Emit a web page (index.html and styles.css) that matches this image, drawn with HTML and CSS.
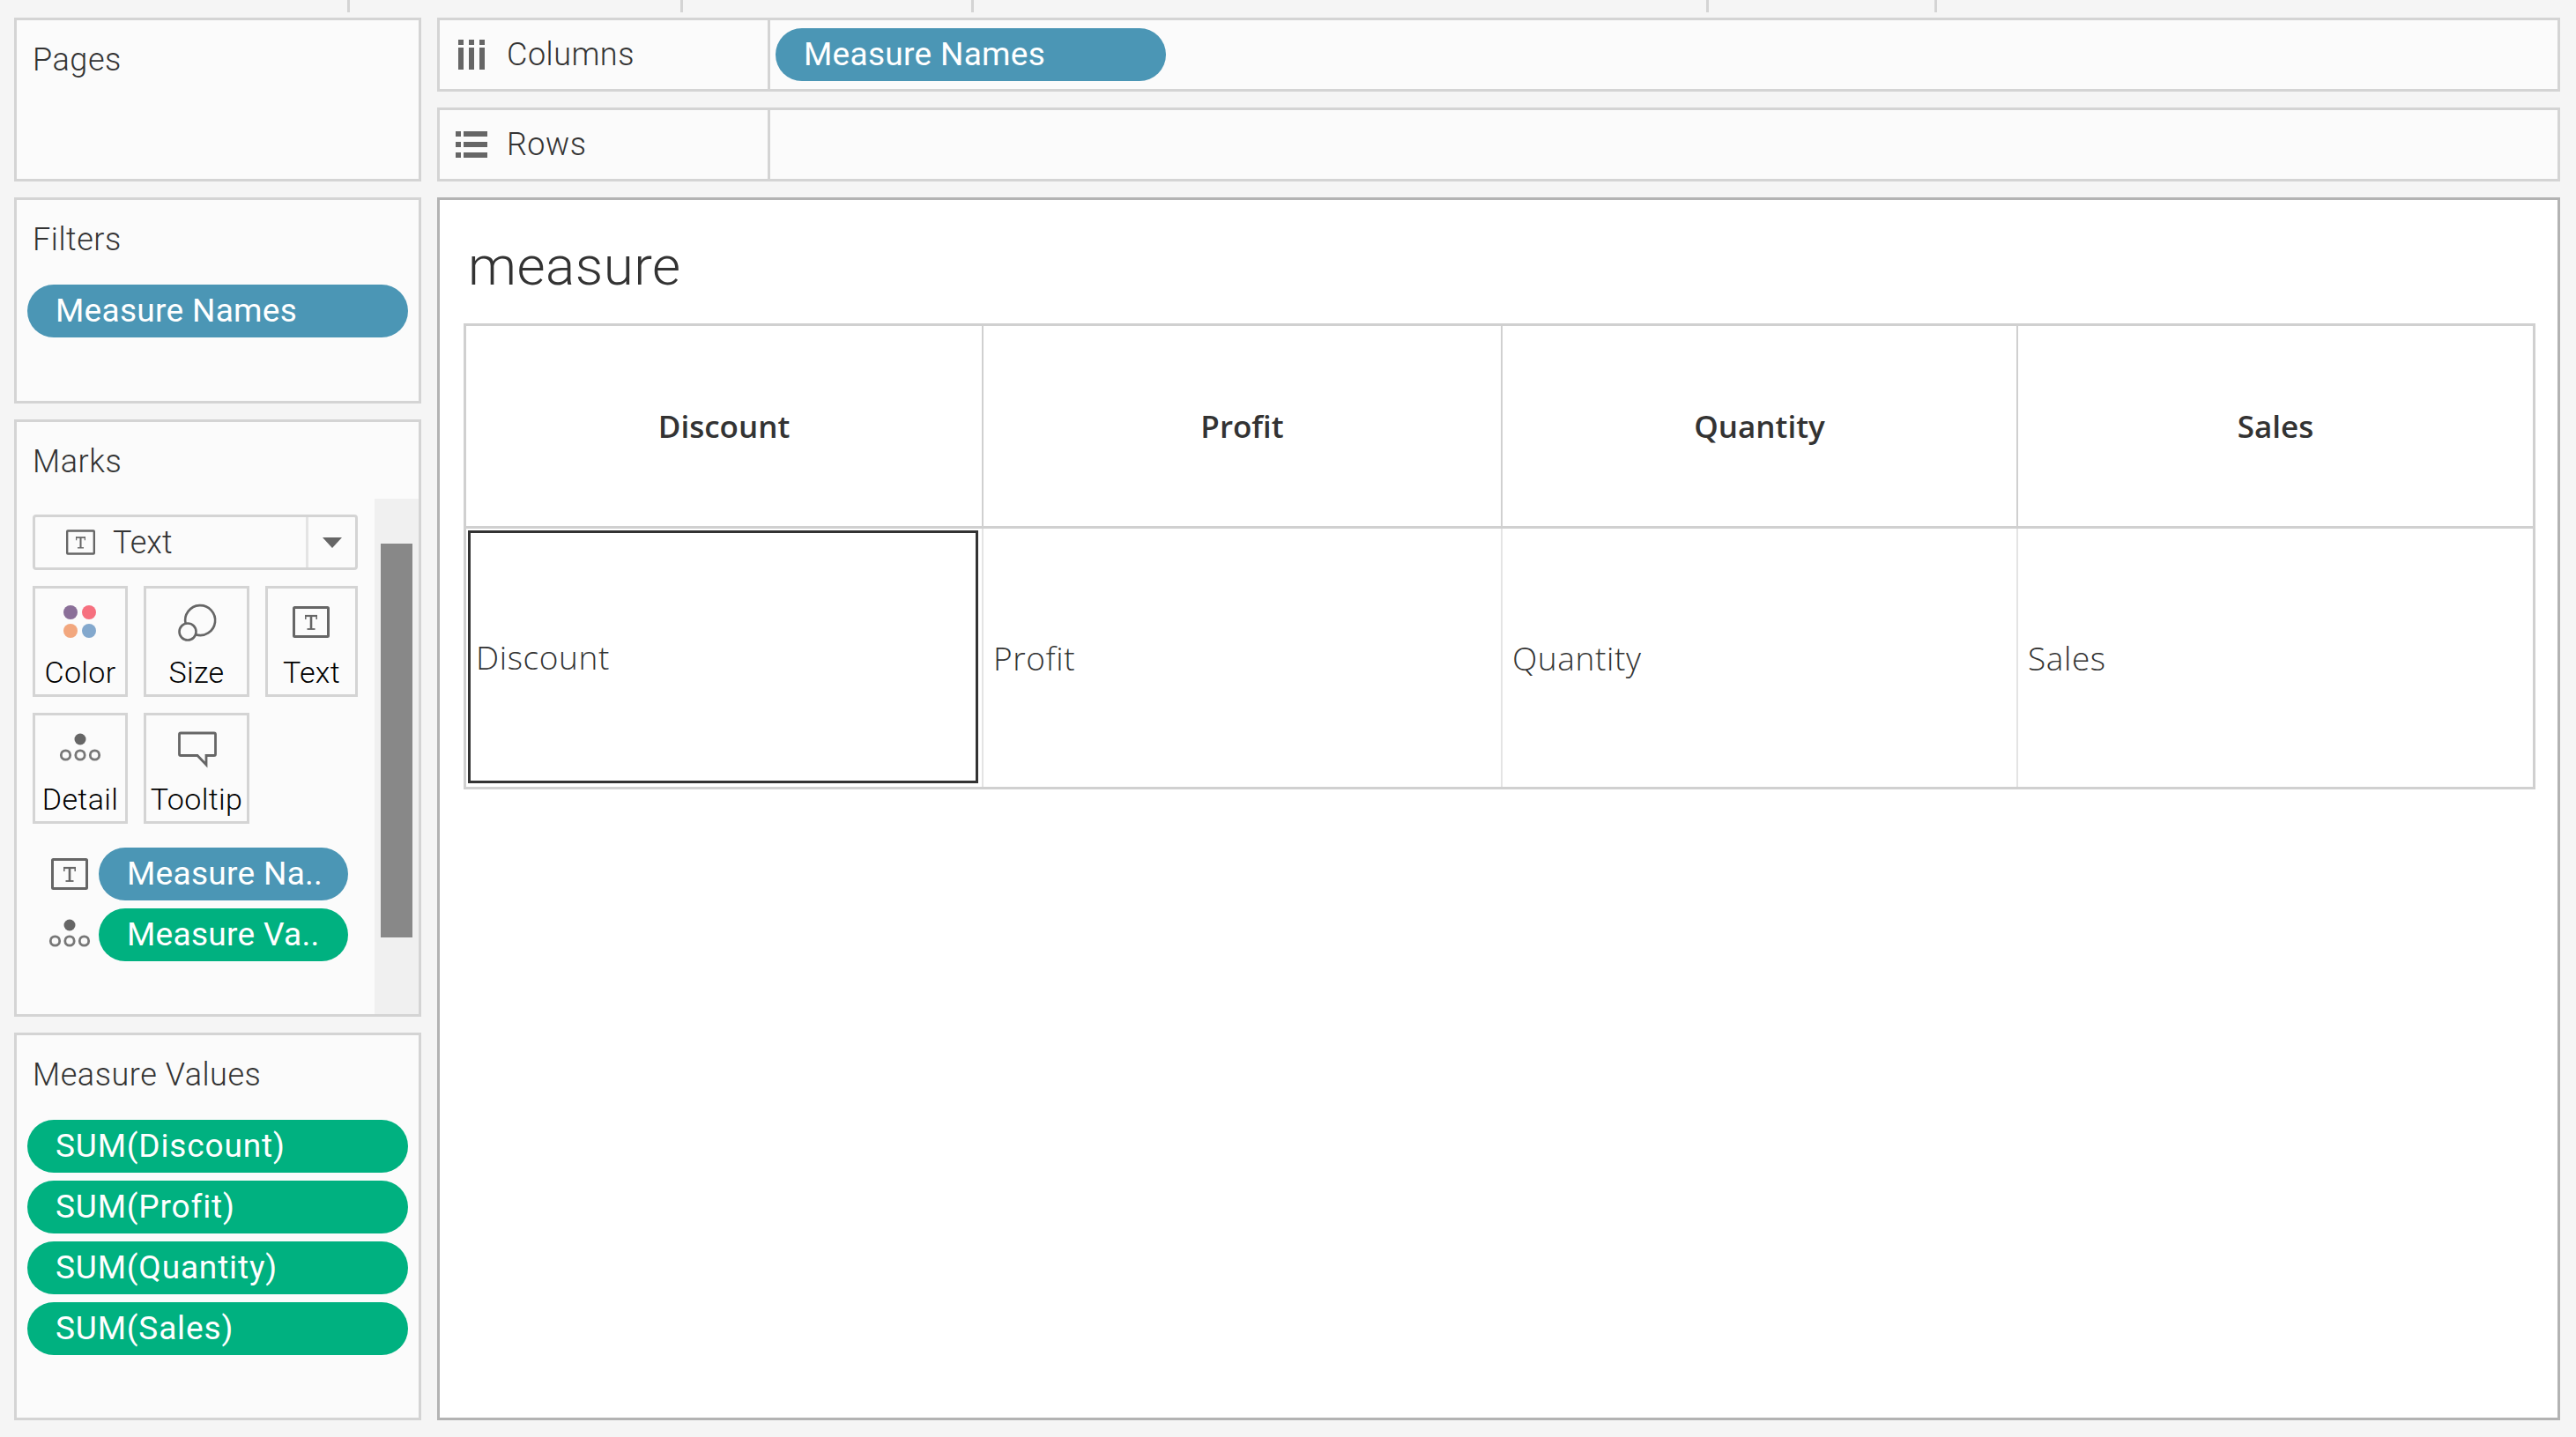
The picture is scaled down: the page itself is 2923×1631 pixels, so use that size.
FILE: index.html
```html
<!DOCTYPE html>
<html lang="en">
<head>
  <meta charset="UTF-8" />
  <title>measure</title>
  <link rel="stylesheet" href="styles.css">
</head>
<body>
  <svg class="icon-defs" width="0" height="0">
    <symbol id="icon-text" viewBox="0 0 42 36">
      <rect x="1.5" y="1.5" width="39" height="33" rx="1" fill="none" stroke="#666" stroke-width="3" />
      <line x1="14" y1="11" x2="28" y2="11" stroke="#666" stroke-width="2.2" />
      <line x1="21" y1="11" x2="21" y2="26" stroke="#666" stroke-width="2.6" />
      <line x1="16.5" y1="26" x2="25.5" y2="26" stroke="#666" stroke-width="1.8" />
      <line x1="14.8" y1="10" x2="14.8" y2="15" stroke="#666" stroke-width="1.5" />
      <line x1="27.2" y1="10" x2="27.2" y2="15" stroke="#666" stroke-width="1.5" />
    </symbol>
    <symbol id="icon-detail" viewBox="0 0 48 36">
      <circle cx="24" cy="7" r="6.5" fill="#666" />
      <circle cx="7.5" cy="25" r="5.2" fill="none" stroke="#777" stroke-width="2.8" />
      <circle cx="24" cy="25" r="5.2" fill="none" stroke="#777" stroke-width="2.8" />
      <circle cx="40.5" cy="25" r="5.2" fill="none" stroke="#777" stroke-width="2.8" />
    </symbol>
  </svg>

  <div class="ticks">
    <span class="tick tick-a"></span>
    <span class="tick tick-b"></span>
    <span class="tick tick-c"></span>
    <span class="tick tick-d"></span>
    <span class="tick tick-e"></span>
  </div>

  <div class="workspace">
    <aside class="sidebar">
      <section class="panel panel-pages">
        <h3 class="panel-title">Pages</h3>
      </section>

      <section class="panel panel-filters">
        <h3 class="panel-title">Filters</h3>
        <div class="pill-list">
          <div class="pill pill-dim">Measure Names</div>
        </div>
      </section>

      <section class="panel panel-marks">
        <div class="marks-main">
          <h3 class="panel-title">Marks</h3>
          <div class="mark-select">
            <div class="mark-select-value">
              <svg class="select-icon"><use href="#icon-text" /></svg>
              <span>Text</span>
            </div>
            <div class="mark-select-arrow"></div>
          </div>

          <div class="mark-cards">
            <div class="mark-card card-narrow">
              <svg class="card-icon" viewBox="0 0 60 48">
                <circle cx="19" cy="13" r="8" fill="#8a6f98" />
                <circle cx="40" cy="13" r="8" fill="#f6707f" />
                <circle cx="19" cy="34" r="8" fill="#f2a77e" />
                <circle cx="40" cy="34" r="8" fill="#83a8cd" />
              </svg>
              <span>Color</span>
            </div>
            <div class="mark-card card-wide">
              <svg class="card-icon" viewBox="0 0 60 48">
                <path d="M17.600 26 A17 17 0 1 1 29 38.300" fill="none" stroke="#666" stroke-width="2.6" />
                <circle cx="20" cy="35" r="9.500" fill="none" stroke="#666" stroke-width="2.6" />
              </svg>
              <span>Size</span>
            </div>
            <div class="mark-card card-last">
              <svg class="card-icon" viewBox="0 0 60 48"><use href="#icon-text" x="8" y="6" width="42" height="36" /></svg>
              <span>Text</span>
            </div>
            <div class="mark-card card-narrow">
              <svg class="card-icon" viewBox="0 0 60 48"><use href="#icon-detail" x="6" y="6" width="48" height="36" /></svg>
              <span>Detail</span>
            </div>
            <div class="mark-card card-wide">
              <svg class="card-icon" viewBox="0 0 60 48">
                <path d="M12 6 H50 Q51.500 6 51.500 7.500 V30 Q51.500 31.500 50 31.500 H41 V42 L31 31.500 H12 Q10.500 31.500 10.500 30 V7.500 Q10.500 6 12 6 Z" fill="none" stroke="#666" stroke-width="2.8" />
              </svg>
              <span>Tooltip</span>
            </div>
          </div>

          <div class="mark-fields">
            <div class="mark-field">
              <svg class="field-icon"><use href="#icon-text" x="3" y="0" width="42" height="36" /></svg>
              <div class="pill pill-dim">Measure Na..</div>
            </div>
            <div class="mark-field">
              <svg class="field-icon"><use href="#icon-detail" /></svg>
              <div class="pill pill-measure">Measure Va..</div>
            </div>
          </div>
        </div>

        <div class="scrollbar">
          <div class="scrollbar-thumb"></div>
        </div>
      </section>

      <section class="panel panel-values">
        <h3 class="panel-title">Measure Values</h3>
        <div class="pill-list">
          <div class="pill pill-measure pill-sum">SUM(Discount)</div>
          <div class="pill pill-measure pill-sum">SUM(Profit)</div>
          <div class="pill pill-measure pill-sum">SUM(Quantity)</div>
          <div class="pill pill-measure pill-sum">SUM(Sales)</div>
        </div>
      </section>
    </aside>

    <main class="main">
      <div class="shelf">
        <div class="shelf-label">
          <svg class="shelf-icon" viewBox="0 0 36 36">
            <rect x="3" y="1" width="6" height="6" fill="#666" />
            <rect x="3" y="10" width="6" height="25" fill="#666" />
            <rect x="15" y="1" width="6" height="6" fill="#666" />
            <rect x="15" y="10" width="6" height="25" fill="#666" />
            <rect x="27" y="1" width="6" height="6" fill="#666" />
            <rect x="27" y="10" width="6" height="25" fill="#666" />
          </svg>
          <span>Columns</span>
        </div>
        <div class="shelf-body">
          <div class="pill pill-dim pill-shelf">Measure Names</div>
        </div>
      </div>

      <div class="shelf">
        <div class="shelf-label">
          <svg class="shelf-icon" viewBox="0 0 36 36">
            <rect x="0" y="3" width="6" height="6" fill="#666" />
            <rect x="9" y="3" width="27" height="6" fill="#666" />
            <rect x="0" y="15" width="6" height="6" fill="#666" />
            <rect x="9" y="15" width="27" height="6" fill="#666" />
            <rect x="0" y="27" width="6" height="6" fill="#666" />
            <rect x="9" y="27" width="27" height="6" fill="#666" />
          </svg>
          <span>Rows</span>
        </div>
        <div class="shelf-body"></div>
      </div>

      <div class="canvas">
        <h1 class="sheet-title">measure</h1>
        <div class="crosstab">
          <div class="head-cell">Discount</div>
          <div class="head-cell">Profit</div>
          <div class="head-cell">Quantity</div>
          <div class="head-cell head-last">Sales</div>

          <div class="body-cell body-selected">
            <div class="selection">Discount</div>
          </div>
          <div class="body-cell">Profit</div>
          <div class="body-cell">Quantity</div>
          <div class="body-cell body-last">Sales</div>
        </div>
      </div>
    </main>
  </div>
</body>
</html>
```

FILE: styles.css
```css
* {
  box-sizing: border-box;
}

html, body {
  height: 100%;
}

body {
  margin: 0;
  overflow: hidden;
  font-family: Roboto, "Liberation Sans", sans-serif;
  font-size: 37px;
  color: #333;
  background-color: #f5f5f5;
}

.icon-defs {
  display: block;
  height: 0;
}

/* top strip */
.ticks {
  display: flex;
  height: 14px;
}

.tick {
  display: block;
  height: 14px;
  border-right: 3px solid #d4d4d4;
}

.tick-a { width: 397px; }
.tick-b { width: 378px; }
.tick-c { width: 330px; }
.tick-d { width: 834px; }
.tick-e { width: 259px; }

.workspace {
  display: flex;
  gap: 18px;
  height: 1592px;
  margin-top: 6px;
  padding-left: 16px;
}

/* left cards */
.sidebar {
  display: flex;
  flex-direction: column;
  gap: 18px;
  width: 462px;
}

.panel {
  background-color: #fbfbfb;
  border: 3px solid #d4d4d4;
  padding: 0 12px;
}

.panel-pages { height: 186px; }
.panel-filters { height: 234px; }
.panel-marks {
  display: flex;
  height: 678px;
  padding: 0;
}
.panel-values { height: 440px; }

.panel-title {
  margin: 0;
  padding: 24px 0 0 6px;
  font-size: 36px;
  font-weight: 300;
  line-height: 42px;
  letter-spacing: 0.55px;
}

.pill-list {
  display: flex;
  flex-direction: column;
  gap: 9px;
  margin-top: 30px;
}

.pill {
  height: 60px;
  padding-left: 32px;
  border-radius: 30px;
  color: #fff;
  font-size: 37px;
  line-height: 59px;
  letter-spacing: 0.3px;
  white-space: nowrap;
}

.pill-sum {
  letter-spacing: 0.85px;
}

.pill-dim { background-color: #4b96b5; }
.pill-measure { background-color: #00b180; }

/* marks */
.marks-main {
  flex: 1;
  padding-left: 18px;
}

.panel-marks .panel-title {
  padding-left: 0;
}

.mark-select {
  display: flex;
  width: 369px;
  height: 63px;
  margin-top: 39px;
  border: 3px solid #d4d4d4;
  border-radius: 4px;
}

.mark-select-value {
  display: flex;
  flex: 1;
  align-items: center;
  gap: 20px;
  padding-left: 35px;
  font-size: 36px;
  font-weight: 300;
}

.select-icon {
  width: 33px;
  height: 29px;
}

.mark-select-arrow {
  display: flex;
  align-items: center;
  justify-content: center;
  width: 56px;
  border-left: 3px solid #e4e4e4;
}

.mark-select-arrow::after {
  content: "";
  border-left: 11px solid transparent;
  border-right: 11px solid transparent;
  border-top: 12px solid #666;
}

.mark-cards {
  display: grid;
  grid-template-columns: 108px 120px 105px;
  column-gap: 18px;
  row-gap: 18px;
  margin-top: 18px;
}

.mark-card {
  display: flex;
  flex-direction: column;
  align-items: center;
  height: 126px;
  padding-top: 14px;
  border: 3px solid #d4d4d4;
  color: #000;
  font-size: 34px;
  font-weight: 300;
  line-height: 40px;
  letter-spacing: 0.35px;
}

.card-icon {
  width: 60px;
  height: 48px;
  margin-bottom: 13px;
}

.mark-fields {
  display: flex;
  flex-direction: column;
  gap: 9px;
  margin-top: 27px;
}

.mark-field {
  display: flex;
  align-items: center;
  gap: 9px;
}

.field-icon {
  flex: none;
  width: 48px;
  height: 36px;
  margin-left: 18px;
}

.mark-field .pill {
  width: 283px;
}

.scrollbar {
  width: 50px;
  margin-top: 87px;
  padding: 51px 7px 0;
  background-color: #f0f0f0;
}

.scrollbar-thumb {
  height: 447px;
  background-color: #888;
}

/* shelves */
.main {
  display: flex;
  flex-direction: column;
  gap: 18px;
  width: 2409px;
}

.shelf {
  display: flex;
  height: 84px;
  background-color: #fbfbfb;
  border: 3px solid #d4d4d4;
}

.shelf-label {
  display: flex;
  align-items: center;
  gap: 22px;
  width: 375px;
  padding-left: 18px;
  border-right: 3px solid #d4d4d4;
  font-size: 36px;
  font-weight: 300;
  letter-spacing: 0.5px;
}

.shelf-icon {
  flex: none;
  width: 36px;
  height: 36px;
}

.shelf-body {
  display: flex;
  flex: 1;
  align-items: center;
  padding-left: 6px;
}

.pill-shelf {
  width: 443px;
}

/* view */
.canvas {
  height: 1388px;
  background-color: #fff;
  border: 3px solid #b3b3b3;
  padding-left: 27px;
}

.sheet-title {
  height: 140px;
  margin: 0;
  padding: 39px 0 0 5px;
  font-size: 62px;
  font-weight: 300;
  line-height: 72px;
  letter-spacing: 0.5px;
}

.crosstab {
  display: grid;
  grid-template-columns: 587px 589px 585px 584px;
  grid-template-rows: 230px 293px;
  width: 2351px;
  border: 3px solid #d0d0d0;
  font-family: "Open Sans", "Liberation Sans", sans-serif;
}

.head-cell {
  display: flex;
  align-items: center;
  justify-content: center;
  border-right: 2px solid #d0d0d0;
  border-bottom: 3px solid #d0d0d0;
  font-weight: 600;
  font-size: 35px;
}

.head-last {
  border-right: 0;
}

.body-cell {
  display: flex;
  align-items: center;
  padding-left: 11px;
  border-right: 2px solid #e4e4e4;
  font-weight: 300;
  font-size: 37px;
  letter-spacing: 0.6px;
}

.body-last {
  border-right: 0;
}

.body-selected {
  padding: 2px 4px 4px 2px;
}

.selection {
  display: flex;
  align-items: center;
  width: 100%;
  height: 100%;
  padding-left: 6px;
  border: 3px solid #333;
}
```
